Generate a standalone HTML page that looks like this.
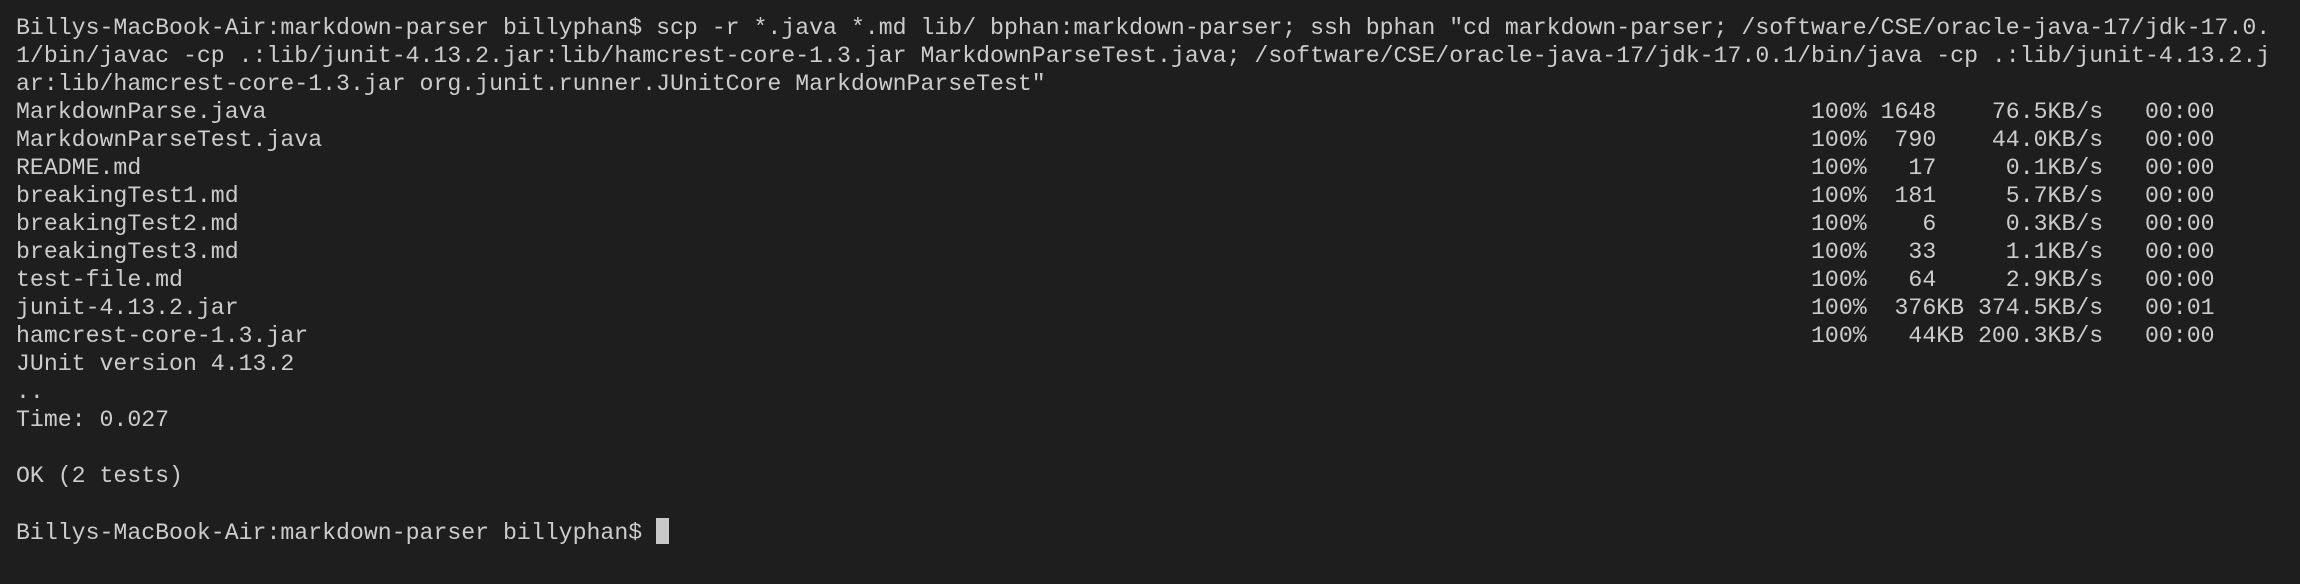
<!DOCTYPE html>
<html><head><meta charset="utf-8"><style>
html,body{margin:0;padding:0;background:#1e1e1e;}
body{width:2300px;height:584px;overflow:hidden;}
.t{position:absolute;left:16px;top:14px;font-family:"Liberation Mono",monospace;font-size:23.2px;line-height:28px;color:#cccccc;white-space:pre;}
.n{display:inline-block;width:129ch;}
.cur{display:inline-block;width:13px;height:26px;background:#c8c8c8;vertical-align:-5px;}
</style></head><body><div class="t">Billys-MacBook-Air:markdown-parser billyphan$ scp -r *.java *.md lib/ bphan:markdown-parser; ssh bphan "cd markdown-parser; /software/CSE/oracle-java-17/jdk-17.0.
1/bin/javac -cp .:lib/junit-4.13.2.jar:lib/hamcrest-core-1.3.jar MarkdownParseTest.java; /software/CSE/oracle-java-17/jdk-17.0.1/bin/java -cp .:lib/junit-4.13.2.j
ar:lib/hamcrest-core-1.3.jar org.junit.runner.JUnitCore MarkdownParseTest"
<span class="n">MarkdownParse.java</span>100% 1648    76.5KB/s   00:00
<span class="n">MarkdownParseTest.java</span>100%  790    44.0KB/s   00:00
<span class="n">README.md</span>100%   17     0.1KB/s   00:00
<span class="n">breakingTest1.md</span>100%  181     5.7KB/s   00:00
<span class="n">breakingTest2.md</span>100%    6     0.3KB/s   00:00
<span class="n">breakingTest3.md</span>100%   33     1.1KB/s   00:00
<span class="n">test-file.md</span>100%   64     2.9KB/s   00:00
<span class="n">junit-4.13.2.jar</span>100%  376KB 374.5KB/s   00:01
<span class="n">hamcrest-core-1.3.jar</span>100%   44KB 200.3KB/s   00:00
JUnit version 4.13.2
..
Time: 0.027

OK (2 tests)

Billys-MacBook-Air:markdown-parser billyphan$ <span class="cur"></span></div></body></html>
